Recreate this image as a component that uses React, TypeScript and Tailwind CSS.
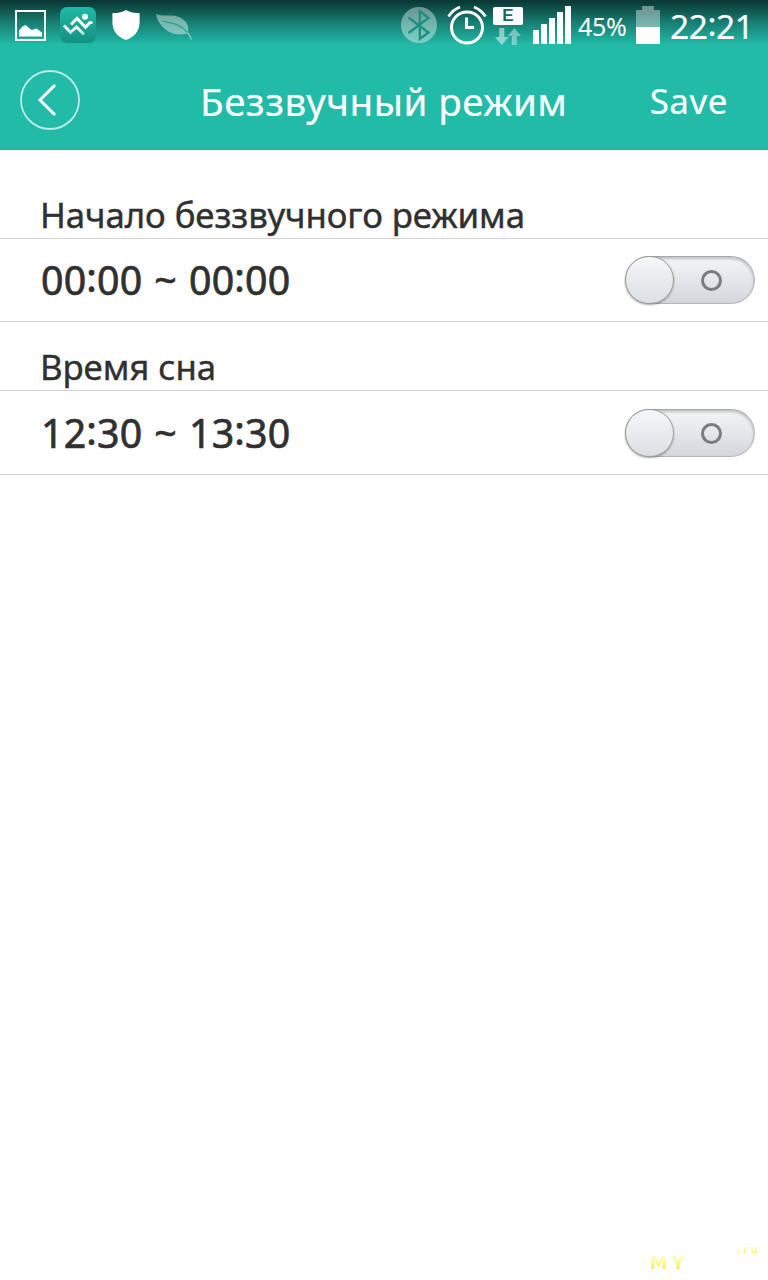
import React from "react";

function PictureIcon() {
  return (
    <svg className="h-8 w-8" viewBox="0 0 32 32">
      <rect x="2" y="2" width="29" height="29" fill="none" stroke="#fff" strokeWidth="2" />
      <path d="M5 27.500V21.500L8.500 17.500L11.500 16L17.500 21L22.500 19.500L28 23.500V27.500Z" fill="#fff" />
    </svg>
  );
}

function RunnerIcon() {
  return (
    <svg className="h-9 w-9" viewBox="0 0 36 36">
      <defs>
        <linearGradient id="runnerBg" x1="0" y1="0" x2="0" y2="1">
          <stop offset="0" stopColor="#20b8a6" />
          <stop offset="1" stopColor="#13917f" />
        </linearGradient>
        <linearGradient id="runnerFg" x1="0" y1="0" x2="0" y2="1">
          <stop offset="0.3" stopColor="#fff" />
          <stop offset="1" stopColor="#a5d5cc" />
        </linearGradient>
      </defs>
      <rect width="36" height="36" rx="7" fill="url(#runnerBg)" />
      <circle cx="25" cy="9.800" r="3" fill="#fff" />
      <path d="M11 17.500L17 11.500L25.500 20.300L30 15.500H32.500" fill="none" stroke="#fff" strokeWidth="3" />
      <path d="M4 18.500L10.500 25.500L16.500 20L24 27.500" fill="none" stroke="url(#runnerFg)" strokeWidth="3" />
    </svg>
  );
}

function ShieldIcon() {
  return (
    <svg className="h-8 w-7" viewBox="0 0 28 32">
      <path d="M14 1Q20 4.300 27.600 4.300V13C27.600 21.500 23 28 14 31C5 28 .4 21.500 .4 13V4.300Q8 4.300 14 1Z" fill="#fff" />
    </svg>
  );
}

function LeafIcon() {
  return (
    <svg className="h-8 w-9" viewBox="0 0 36 32">
      <path
        d="M0 5C7 8.500 15 4.500 24 8.500C31 12 33 17 32.200 23C34 25.500 35.500 28 36 31C34.500 31 33.500 27 31 24.500C24 26.500 15 25.500 9 20C4 16 1 11 0 5Z"
        fill="#fff"
        fillOpacity=".43"
      />
      <path d="M6 12C13 14 23 13.500 31.500 23.500" fill="none" stroke="#20a292" strokeWidth="1.200" />
    </svg>
  );
}

function BluetoothIcon() {
  return (
    <svg className="h-9 w-9" viewBox="0 0 36 36">
      <circle cx="18" cy="18" r="18" fill="#fff" fillOpacity=".4" />
      <path d="M7.500 10.500L27.500 25.500L18.800 32V4L27.500 11L7.500 26" fill="none" stroke="#1b9082" strokeWidth="2.300" />
    </svg>
  );
}

function AlarmIcon() {
  return (
    <svg className="h-10 w-10" viewBox="0 0 40 40">
      <circle cx="20" cy="22.500" r="15.500" fill="none" stroke="#fff" strokeWidth="3" />
      <path d="M19.500 12.500V22.500H27" fill="none" stroke="#fff" strokeWidth="3" />
      <path d="M1.500 11.500Q6 4.500 13 2M27 2Q34 4.500 38.500 11.500" fill="none" stroke="#fff" strokeWidth="2.800" />
    </svg>
  );
}

function DataIcon() {
  return (
    <div className="flex w-[30px] flex-col items-center">
      <div className="flex h-[18px] w-[30px] items-center justify-center rounded-[2px] bg-white font-['Liberation_Sans',sans-serif] text-[17px] leading-[18px] font-bold text-[#16695f]">
        E
      </div>
      <svg className="mt-[3px] h-[17px] w-[26px]" viewBox="0 0 26 17">
        <path d="M4.300 0H9.300V9H13.700L6.800 17L0 9H4.300Z" fill="#fff" fillOpacity=".5" />
        <path d="M19.300 0L26 8H21.800V17H16.800V8H12.800Z" fill="#fff" fillOpacity=".4" />
      </svg>
    </div>
  );
}

function SignalIcon() {
  return (
    <svg className="h-[38px] w-[38px]" viewBox="0 0 38 38" fill="#fff">
      <rect x="0" y="24" width="6" height="14" />
      <rect x="8" y="18" width="6" height="20" />
      <rect x="16" y="12" width="6" height="26" />
      <rect x="24" y="6" width="6" height="32" />
      <rect x="32" y="0" width="6" height="38" />
    </svg>
  );
}

function BatteryIcon() {
  return (
    <svg className="h-[38px] w-6" viewBox="0 0 24 38" fill="#fff">
      <path d="M6 0H18V4H24V21H0V4H6Z" fillOpacity=".4" />
      <rect y="21" width="24" height="17" />
    </svg>
  );
}

function StatusBar() {
  return (
    <div className="flex h-[50px] items-start bg-linear-to-b from-[#0a3632] via-[#177f73] via-45% to-[#21bba8] to-90% text-white">
      <div className="flex items-start pl-[14px]">
        <div className="mt-[9px]"><PictureIcon /></div>
        <div className="mt-[7px] ml-[14px]"><RunnerIcon /></div>
        <div className="mt-[9px] ml-4"><ShieldIcon /></div>
        <div className="mt-[9px] ml-4"><LeafIcon /></div>
      </div>
      <div className="ml-auto flex items-start pr-[17px]">
        <div className="mt-[7px]"><BluetoothIcon /></div>
        <div className="mt-[5px] ml-[10px]"><AlarmIcon /></div>
        <div className="mt-[7px] ml-[6px]"><DataIcon /></div>
        <div className="mt-[6px] ml-[10px]"><SignalIcon /></div>
        <div className="mt-[6px] ml-[7px] w-[50px] text-[25px] leading-[40px] tracking-[-0.3px] whitespace-nowrap">45%</div>
        <div className="mt-[6px] ml-2"><BatteryIcon /></div>
        <div className="mt-[6px] ml-[10px] w-[81px] text-[33.5px] leading-[40px] tracking-[-0.4px] whitespace-nowrap [-webkit-text-stroke:0.2px]">
          22<span className="relative -top-[3px]">:</span>21
        </div>
      </div>
    </div>
  );
}

function Header() {
  return (
    <header className="flex h-[100px] items-center bg-[#21bba8] pr-10 pl-5 text-white">
      <button className="block" aria-label="Back">
        <svg className="h-[60px] w-[60px]" viewBox="0 0 60 60" fill="none">
          <circle cx="30" cy="30" r="29" stroke="#fff" strokeOpacity=".7" strokeWidth="1.800" />
          <path d="M35 15L20 30L35 45" stroke="#fff" strokeWidth="3" />
        </svg>
      </button>
      <h1 className="ml-[120px] pt-0.5 text-[38.5px] leading-[60px] tracking-[0.5px] whitespace-nowrap [-webkit-text-stroke:0.2px]">Беззвучный режим</h1>
      <button className="ml-auto pt-0.5 text-[35px] leading-[60px] tracking-[0.5px] [-webkit-text-stroke:0.2px]">Save</button>
    </header>
  );
}

function Toggle({ label }: { label: string }) {
  return (
    <button
      role="switch"
      aria-checked={false}
      aria-label={label}
      className="flex h-12 w-[130px] items-center rounded-full border border-[#b5b7b9] border-t-[#a6a8a9] bg-linear-to-b from-[#f4f5f7] to-[#d3d7dd] shadow-[inset_0_2px_3px_rgba(0,0,0,0.22)]"
    >
      <span className="-ml-px h-12 w-[49px] shrink-0 rounded-full border border-[#9c9c98] bg-linear-to-b from-[#f6f7f9] to-[#dcdfe5] shadow-[0_1px_2px_rgba(0,0,0,0.35)]" />
      <span className="ml-[27px] h-[21px] w-[21px] rounded-full border-3 border-[#797c80]" />
    </button>
  );
}

function Section({ title, start, end, headClass, rowClass }: { title: string; start: string[]; end: string[]; headClass: string; rowClass: string }) {
  return (
    <section>
      <h2 className={"flex items-end border-b border-[#d0d0d0] pl-10 text-[34.8px] leading-[46px] tracking-[-0.08px] whitespace-nowrap [-webkit-text-stroke:0.4px] " + headClass}>
        {title}
      </h2>
      <div className={"flex items-center justify-between border-b border-[#d0d0d0] pr-[13px] pl-[41px] " + rowClass}>
        <div className="text-[39.3px] leading-[60px] tracking-[0.2px] [word-spacing:1.5px] whitespace-nowrap [-webkit-text-stroke:0.7px]">
          {start[0]}<span className="relative -top-[3px]">:</span>{start[1]} ~ {end[0]}
          <span className="relative -top-[3px]">:</span>{end[1]}
        </div>
        <Toggle label={title} />
      </div>
    </section>
  );
}

export default function App() {
  return (
    <div className="flex h-[1280px] w-[768px] flex-col overflow-hidden bg-white font-['Noto_Sans',sans-serif] text-[#303030]">
      <StatusBar />
      <Header />
      <main>
        <Section title="Начало беззвучного режима" start={["00", "00"]} end={["00", "00"]} headClass="h-[89px]" rowClass="h-[83px]" />
        <Section title="Время сна" start={["12", "30"]} end={["13", "30"]} headClass="h-[69px]" rowClass="h-[84px] pt-px" />
      </main>
      <footer className="mt-auto flex h-10 items-start justify-end pr-2 font-['DejaVu_Sans',sans-serif] font-bold">
        <span className="mt-[13px] mr-[48px] bg-linear-to-b from-[#fefcd0] from-15% to-[#f8f04a] to-75% bg-clip-text text-[18px] leading-[20px] tracking-[4px] text-transparent">MY</span>
        <span className="mt-[3px] bg-linear-to-b from-[#fefcd0] from-20% to-[#f8f04a] to-80% bg-clip-text text-[11px] leading-[14px] tracking-[2px] text-transparent">.ru</span>
      </footer>
    </div>
  );
}
